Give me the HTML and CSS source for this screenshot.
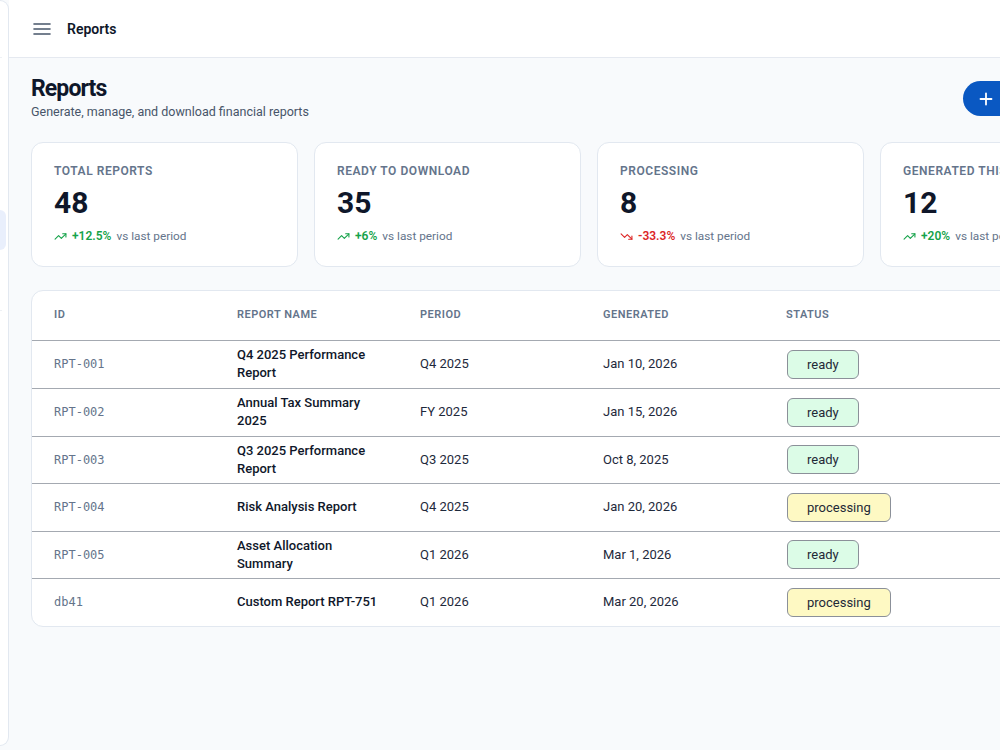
FILE: index.html
```html
<!DOCTYPE html>
<html lang="en">
<head>
<meta charset="utf-8">
<title>Reports</title>
<link rel="stylesheet" href="styles.css">
</head>
<body>
<div class="app">
  <aside class="sidebar">
    <div class="side-brand"></div>
    <nav class="side-nav">
      <a class="side-link" href="#"></a>
      <a class="side-link" href="#"></a>
      <a class="side-link" href="#"></a>
      <a class="side-link is-active" href="#"></a>
    </nav>
    <div class="side-divider"></div>
  </aside>

  <div class="main">
    <header class="topbar">
      <button class="menu-btn" aria-label="Toggle menu">
        <svg width="18" height="18" viewBox="0 0 18 18" fill="none" stroke="currentColor" stroke-width="1.6" stroke-linecap="round">
          <line x1="1" y1="4" x2="17" y2="4"/>
          <line x1="1" y1="9" x2="17" y2="9"/>
          <line x1="1" y1="14" x2="17" y2="14"/>
        </svg>
      </button>
      <span class="topbar-title">Reports</span>
    </header>

    <main class="content">
      <div class="page-head">
        <div>
          <h1 class="page-title">Reports</h1>
          <p class="page-sub">Generate, manage, and download financial reports</p>
        </div>
        <button class="btn-primary">
          <svg width="14" height="14" viewBox="0 0 14 14" fill="none" stroke="currentColor" stroke-width="1.8" stroke-linecap="round">
            <line x1="7" y1="1.5" x2="7" y2="12.5"/>
            <line x1="1.5" y1="7" x2="12.5" y2="7"/>
          </svg>
          <span>Generate Report</span>
        </button>
      </div>

      <section class="stats">
        <div class="stat-card">
          <div class="stat-label">Total Reports</div>
          <div class="stat-value">48</div>
          <div class="stat-trend">
            <svg class="trend-icon up" viewBox="0 0 24 24" fill="none" stroke="currentColor" stroke-width="2" stroke-linecap="round" stroke-linejoin="round"><polyline points="22 7 13.5 15.5 8.5 10.5 2 17"/><polyline points="16 7 22 7 22 13"/></svg>
            <span class="delta up">+12.5%</span>
            <span class="delta-note">vs last period</span>
          </div>
        </div>
        <div class="stat-card">
          <div class="stat-label">Ready to Download</div>
          <div class="stat-value">35</div>
          <div class="stat-trend">
            <svg class="trend-icon up" viewBox="0 0 24 24" fill="none" stroke="currentColor" stroke-width="2" stroke-linecap="round" stroke-linejoin="round"><polyline points="22 7 13.5 15.5 8.5 10.5 2 17"/><polyline points="16 7 22 7 22 13"/></svg>
            <span class="delta up">+6%</span>
            <span class="delta-note">vs last period</span>
          </div>
        </div>
        <div class="stat-card">
          <div class="stat-label">Processing</div>
          <div class="stat-value">8</div>
          <div class="stat-trend">
            <svg class="trend-icon down" viewBox="0 0 24 24" fill="none" stroke="currentColor" stroke-width="2" stroke-linecap="round" stroke-linejoin="round"><polyline points="22 17 13.5 8.5 8.5 13.5 2 7"/><polyline points="16 17 22 17 22 11"/></svg>
            <span class="delta down">-33.3%</span>
            <span class="delta-note">vs last period</span>
          </div>
        </div>
        <div class="stat-card">
          <div class="stat-label">Generated This Month</div>
          <div class="stat-value">12</div>
          <div class="stat-trend">
            <svg class="trend-icon up" viewBox="0 0 24 24" fill="none" stroke="currentColor" stroke-width="2" stroke-linecap="round" stroke-linejoin="round"><polyline points="22 7 13.5 15.5 8.5 10.5 2 17"/><polyline points="16 7 22 7 22 13"/></svg>
            <span class="delta up">+20%</span>
            <span class="delta-note">vs last period</span>
          </div>
        </div>
      </section>

      <section class="table-card">
        <div class="t-row t-head">
          <div class="t-cell">ID</div>
          <div class="t-cell">Report Name</div>
          <div class="t-cell">Period</div>
          <div class="t-cell">Generated</div>
          <div class="t-cell">Status</div>
          <div class="t-cell"></div>
        </div>

        <div class="t-row">
          <div class="t-cell t-id">RPT-001</div>
          <div class="t-cell t-name">Q4 2025 Performance Report</div>
          <div class="t-cell">Q4 2025</div>
          <div class="t-cell">Jan 10, 2026</div>
          <div class="t-cell"><span class="badge ready">ready</span></div>
          <div class="t-cell"></div>
        </div>
        <div class="t-row">
          <div class="t-cell t-id">RPT-002</div>
          <div class="t-cell t-name">Annual Tax Summary 2025</div>
          <div class="t-cell">FY 2025</div>
          <div class="t-cell">Jan 15, 2026</div>
          <div class="t-cell"><span class="badge ready">ready</span></div>
          <div class="t-cell"></div>
        </div>
        <div class="t-row">
          <div class="t-cell t-id">RPT-003</div>
          <div class="t-cell t-name">Q3 2025 Performance Report</div>
          <div class="t-cell">Q3 2025</div>
          <div class="t-cell">Oct 8, 2025</div>
          <div class="t-cell"><span class="badge ready">ready</span></div>
          <div class="t-cell"></div>
        </div>
        <div class="t-row">
          <div class="t-cell t-id">RPT-004</div>
          <div class="t-cell t-name">Risk Analysis Report</div>
          <div class="t-cell">Q4 2025</div>
          <div class="t-cell">Jan 20, 2026</div>
          <div class="t-cell"><span class="badge processing">processing</span></div>
          <div class="t-cell"></div>
        </div>
        <div class="t-row">
          <div class="t-cell t-id">RPT-005</div>
          <div class="t-cell t-name">Asset Allocation Summary</div>
          <div class="t-cell">Q1 2026</div>
          <div class="t-cell">Mar 1, 2026</div>
          <div class="t-cell"><span class="badge ready">ready</span></div>
          <div class="t-cell"></div>
        </div>
        <div class="t-row">
          <div class="t-cell t-id">db41</div>
          <div class="t-cell t-name">Custom Report RPT-751</div>
          <div class="t-cell">Q1 2026</div>
          <div class="t-cell">Mar 20, 2026</div>
          <div class="t-cell"><span class="badge processing">processing</span></div>
          <div class="t-cell"></div>
        </div>
      </section>
    </main>
  </div>
</div>
</body>
</html>
```

FILE: styles.css
```css
* { box-sizing: border-box; }

html, body {
  margin: 0;
  height: 100%;
}

body {
  background: #f8fafc;
  font-family: Roboto, "Noto Sans", "Liberation Sans", sans-serif;
  color: #0f172a;
  overflow: hidden;
}

.app {
  display: flex;
  height: 100vh;
}

/* Collapsed side navigation (mostly tucked off the left edge) */
.sidebar {
  flex: 0 0 9px;
  height: 746px;
  background: #ffffff;
  border: 1px solid #e2e8f0;
  border-left: none;
  border-radius: 0 10px 10px 0;
  overflow: hidden;
  display: flex;
  flex-direction: column;
}

.side-brand {
  height: 57px;
  border-bottom: 1px solid #eef1f5;
  margin-right: 6px;
}

.side-nav {
  display: flex;
  flex-direction: column;
  gap: 4px;
  padding-top: 20px;
  margin-right: 2px;
}

.side-link {
  display: block;
  height: 40px;
  border-radius: 0 8px 8px 0;
}

.side-link.is-active {
  background: #e9effc;
}

.side-divider {
  margin-top: 60px;
  height: 1px;
  background: #eef1f5;
  margin-right: 6px;
}

.main {
  flex: 0 0 1160px;
  display: flex;
  flex-direction: column;
}

/* Top bar */
.topbar {
  height: 58px;
  background: #ffffff;
  border-bottom: 1px solid #e5e9f0;
  display: flex;
  align-items: center;
  gap: 16px;
  padding-left: 24px;
}

.menu-btn {
  border: none;
  background: none;
  padding: 0;
  width: 18px;
  height: 18px;
  color: #475569;
  display: flex;
}

.topbar-title {
  font-size: 14px;
  font-weight: 600;
  color: #0f172a;
}

/* Page body */
.content {
  padding: 16px 22px 0;
}

.page-head {
  display: flex;
  justify-content: space-between;
  align-items: flex-start;
  margin-bottom: 21px;
}

.page-title {
  margin: 0;
  font-size: 23px;
  line-height: 30px;
  font-weight: 700;
  letter-spacing: -0.9px;
  color: #0f172a;
}

.page-sub {
  margin: -1px 0 0;
  font-size: 12.5px;
  line-height: 18px;
  color: #475569;
}

.btn-primary {
  margin-top: 7px;
  width: 184px;
  height: 35px;
  border: none;
  border-radius: 18px;
  background: #0a58c2;
  color: #ffffff;
  font-family: inherit;
  font-size: 14px;
  font-weight: 500;
  display: flex;
  align-items: center;
  gap: 8px;
  padding: 0 17px 0 16px;
}

/* Stat cards */
.stats {
  display: grid;
  grid-template-columns: repeat(4, 1fr);
  gap: 16px;
  margin-bottom: 23px;
}

.stat-card {
  background: #ffffff;
  border: 1px solid #e2e8f0;
  border-radius: 12px;
  padding: 20px 22px 22px;
}

.stat-label {
  font-size: 12px;
  line-height: 16px;
  font-weight: 600;
  letter-spacing: 0.55px;
  text-transform: uppercase;
  color: #64748b;
}

.stat-value {
  margin-top: 6px;
  font-size: 30px;
  line-height: 36px;
  font-weight: 700;
  color: #0f172a;
}

.stat-trend {
  margin-top: 7px;
  display: flex;
  align-items: center;
  font-size: 12px;
  line-height: 16px;
}

.trend-icon {
  width: 13px;
  height: 13px;
  margin-right: 5px;
}

.trend-icon.up, .delta.up { color: #16a34a; }
.trend-icon.down, .delta.down { color: #dc2626; }

.delta {
  font-weight: 600;
  margin-right: 5px;
}

.delta-note {
  color: #64748b;
  font-size: 11.8px;
}

/* Reports table */
.table-card {
  background: #ffffff;
  border: 1px solid #e2e8f0;
  border-radius: 12px;
  overflow: hidden;
}

.t-row {
  display: grid;
  grid-template-columns: 183px 183px 183px 183px 183px 1fr;
  min-height: 47.5px;
  align-items: center;
  border-top: 1px solid #a4a9b1;
}

.t-row.t-head {
  border-top: none;
  min-height: 49.5px;
  border-bottom: 1px solid #a4a9b1;
}

.t-row.t-head + .t-row {
  border-top: none;
}

.t-cell {
  padding: 0 12px 0 22px;
  font-size: 13px;
  line-height: 18px;
  color: #1e293b;
}

.t-head .t-cell {
  font-size: 11px;
  font-weight: 600;
  letter-spacing: 0.5px;
  text-transform: uppercase;
  color: #64748b;
}

.t-id {
  font-family: "DejaVu Sans Mono", "Liberation Mono", monospace;
  font-size: 12px;
  color: #64748b;
}

.t-name {
  font-weight: 500;
  color: #0f172a;
}

.badge {
  display: inline-block;
  margin-left: 1px;
  height: 29px;
  line-height: 27px;
  padding: 0 19px;
  border: 1px solid #8b9099;
  border-radius: 6px;
  font-size: 13px;
  color: #1f2937;
}

.badge.ready { background: #dcfce7; }
.badge.processing { background: #fef9c3; }
```
